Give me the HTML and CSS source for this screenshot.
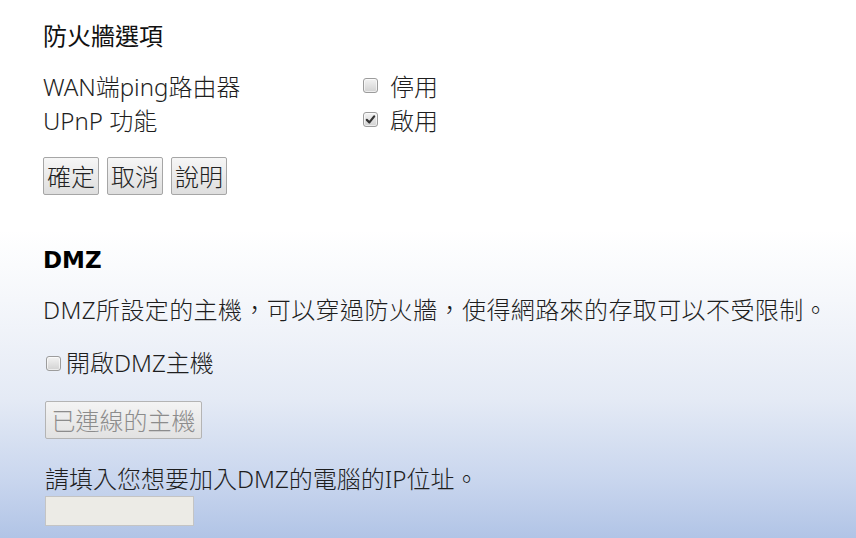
FILE: index.html
```html
<!DOCTYPE html>
<html lang="zh-Hant">
<head>
<meta charset="utf-8">
<title>防火牆選項</title>
<link rel="stylesheet" href="styles.css">
</head>
<body>
<div class="page">
  <h2 class="title">防火牆選項</h2>
  <div class="opts">
    <div class="opt">
      <span class="lbl">WAN端ping路由器</span>
      <span class="chk"><span class="box"></span>停用</span>
    </div>
    <div class="opt">
      <span class="lbl">UPnP 功能</span>
      <span class="chk"><span class="box checked"><svg viewBox="0 0 12 12" width="11" height="11"><path d="M2 6.4 L4.8 9.2 L10 2.6" fill="none" stroke="#333" stroke-width="2.4" stroke-linecap="round" stroke-linejoin="round"/></svg></span>啟用</span>
    </div>
  </div>
  <div class="btns">
    <button class="btn">確定</button>
    <button class="btn">取消</button>
    <button class="btn">說明</button>
  </div>
  <h2 class="dmz">DMZ</h2>
  <p class="desc">DMZ所設定的主機，可以穿過防火牆，使得網路來的存取可以不受限制。</p>
  <div class="dmzchk"><span class="box"></span>開啟DMZ主機</div>
  <button class="btn hostbtn" disabled>已連線的主機</button>
  <p class="hint">請填入您想要加入DMZ的電腦的IP位址。</p>
  <input class="ip" type="text" disabled>
</div>
</body>
</html>
```

FILE: styles.css
```css
html, body {
  margin: 0;
  padding: 0;
  height: 100%;
}
body {
  background: linear-gradient(to bottom, #ffffff 0px, #ffffff 230px, #f5f7fb 300px, #e4eaf5 400px, #c9d6ee 480px, #b1c4e6 538px);
  font-family: "Noto Sans", "Noto Sans CJK TC", sans-serif;
  color: #1e1e1e;
  overflow: hidden;
}
.page {
  padding: 21px 0 0 43px;
  height: 538px;
  box-sizing: border-box;
}
.title {
  margin: 0;
  font-size: 24px;
  font-weight: 400;
  line-height: 30px;
  color: #111;
}
.opts {
  margin-top: 17px;
  font-size: 24px;
}
.opt {
  display: flex;
  align-items: center;
  height: 34px;
}
.lbl {
  width: 320px;
  font-weight: 300;
}
.chk {
  display: flex;
  align-items: center;
  gap: 12px;
  font-weight: 300;
}
.box {
  width: 15px;
  height: 15px;
  border: 1px solid #9c9c9c;
  border-radius: 3px;
  background: linear-gradient(#f3f3f3, #d2d2d2);
  box-shadow: inset 0 0 0 1px rgba(255,255,255,0.6);
  display: inline-flex;
  align-items: center;
  justify-content: center;
  box-sizing: border-box;
  flex: none;
}
.box svg {
  display: block;
}
.btns {
  margin-top: 21px;
  display: flex;
  gap: 8px;
}
.btn {
  font-family: "Noto Sans CJK TC", sans-serif;
  font-size: 24px;
  font-weight: 300;
  line-height: 30px;
  padding: 3px 3px;
  border: 1px solid #a6a6a6;
  border-radius: 2px;
  background: linear-gradient(#f6f6f6, #dedede);
  color: #222;
  margin: 0;
}
.dmz {
  margin: 50px 0 0;
  font-family: "DejaVu Sans", sans-serif;
  font-weight: bold;
  font-size: 23px;
  line-height: 30px;
  color: #000;
}
.desc {
  margin: 20px 0 0;
  font-size: 24px;
  line-height: 30px;
  font-weight: 300;
  letter-spacing: 0.4px;
}
.dmzchk {
  margin: 23px 0 0 3px;
  display: flex;
  align-items: center;
  gap: 5px;
  font-size: 24px;
  line-height: 30px;
  font-weight: 300;
}
.hostbtn {
  margin: 23px 0 0 2px;
  width: 157px;
  padding: 3px 2px;
  color: #8c8c8c;
  background: linear-gradient(#f4f4f4, #e2e2e2);
  border-color: #b4b4b4;
}
.hint {
  margin: 25px 0 0 2px;
  font-size: 24px;
  line-height: 30px;
  font-weight: 300;
}
.ip {
  display: block;
  margin: 2px 0 0 2px;
  width: 149px;
  height: 30px;
  box-sizing: border-box;
  border: 1px solid #c4c4c4;
  background: #ecebe6;
}
```
